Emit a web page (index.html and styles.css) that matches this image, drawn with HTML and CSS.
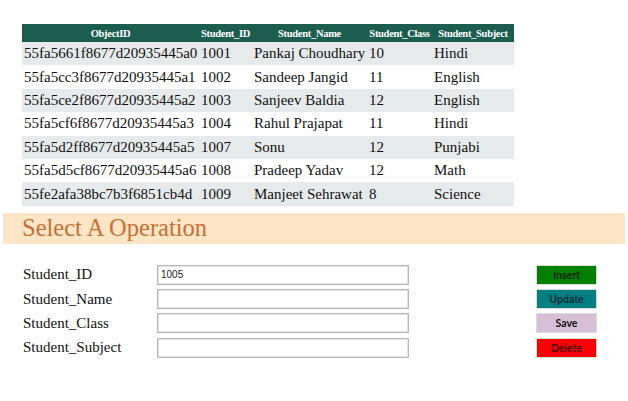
FILE: index.html
```html
<!DOCTYPE html>
<html lang="en">
  <head>
    <meta charset="UTF-8" />
    <title>Student Records</title>
    <link rel="stylesheet" href="styles.css">
  </head>
  <body>
    <table class="records">
      <thead>
        <tr>
          <th class="col-oid">ObjectID</th>
          <th class="col-id">Student_ID</th>
          <th class="col-name">Student_Name</th>
          <th class="col-class">Student_Class</th>
          <th class="col-subject">Student_Subject</th>
        </tr>
      </thead>
      <tbody>
        <tr><td>55fa5661f8677d20935445a0</td><td>1001</td><td>Pankaj Choudhary</td><td>10</td><td>Hindi</td></tr>
        <tr><td>55fa5cc3f8677d20935445a1</td><td>1002</td><td>Sandeep Jangid</td><td>11</td><td>English</td></tr>
        <tr><td>55fa5ce2f8677d20935445a2</td><td>1003</td><td>Sanjeev Baldia</td><td>12</td><td>English</td></tr>
        <tr><td>55fa5cf6f8677d20935445a3</td><td>1004</td><td>Rahul Prajapat</td><td>11</td><td>Hindi</td></tr>
        <tr><td>55fa5d2ff8677d20935445a5</td><td>1007</td><td>Sonu</td><td>12</td><td>Punjabi</td></tr>
        <tr><td>55fa5d5cf8677d20935445a6</td><td>1008</td><td>Pradeep Yadav</td><td>12</td><td>Math</td></tr>
        <tr><td>55fe2afa38bc7b3f6851cb4d</td><td>1009</td><td>Manjeet Sehrawat</td><td>8</td><td>Science</td></tr>
      </tbody>
    </table>

    <div class="banner">
      <h2>Select A Operation</h2>
    </div>

    <div class="operation">
      <div class="fields">
        <label>Student_ID</label>
        <input type="text" class="field-input" value="1005" />
        <label>Student_Name</label>
        <input type="text" class="field-input" />
        <label>Student_Class</label>
        <input type="text" class="field-input" />
        <label>Student_Subject</label>
        <input type="text" class="field-input" />
      </div>

      <div class="actions">
        <button class="btn btn-insert">Insert</button>
        <button class="btn btn-update">Update</button>
        <button class="btn btn-save">Save</button>
        <button class="btn btn-delete">Delete</button>
      </div>
    </div>
  </body>
</html>
```

FILE: styles.css
```css
body {
  margin: 0;
  padding: 0;
  background: #ffffff;
  font-family: "Liberation Serif", "Times New Roman", serif;
  color: #111;
}

.records {
  margin: 24px 0 0 22px;
  border-collapse: collapse;
  width: 492px;
  table-layout: fixed;
}

.records th {
  background: #1b5d4f;
  color: #ffffff;
  font-size: 10.5px;
  letter-spacing: -0.3px;
  font-weight: bold;
  height: 18px;
  padding: 0;
  text-align: center;
  white-space: nowrap;
}

.col-oid { width: 177px; }
.col-id { width: 53px; }
.col-name { width: 115px; }
.col-class { width: 65px; }
.col-subject { width: 82px; }

.records td {
  font-size: 15px;
  height: 23.4px;
  padding: 0 0 0 2px;
  white-space: nowrap;
  line-height: 17px;
}

.records tbody tr:nth-child(odd) {
  background: #e6eaeb;
}

.banner {
  margin: 7px 3px 0 3px;
  height: 31px;
  background: #fde5c6;
  display: flex;
  align-items: center;
}

.banner h2 {
  margin: 0 0 0 19px;
  font-size: 24.5px;
  font-weight: normal;
  color: #c96e34;
}

.operation {
  display: flex;
  margin-top: 21px;
  padding-left: 23px;
}

.fields {
  display: grid;
  grid-template-columns: 134px 252px;
  grid-auto-rows: 20px;
  row-gap: 4.3px;
  align-items: center;
}

.fields label {
  font-size: 15px;
}

.field-input {
  box-sizing: border-box;
  width: 252px;
  height: 20px;
  margin: 0;
  padding: 0 3px;
  border: 1px solid #b9b9b9;
  box-shadow: inset 0 0 0 1px #e2e2e2;
  font-family: "Liberation Sans", Arial, sans-serif;
  font-size: 10px;
  color: #222;
}

.actions {
  display: flex;
  flex-direction: column;
  gap: 4.3px;
  margin-left: 127px;
}

.btn {
  box-sizing: border-box;
  width: 61px;
  height: 20px;
  padding: 0;
  border: 1px solid #dcdcdc;
  font-family: Lato, "Open Sans", sans-serif;
  font-size: 10.5px;
  font-weight: bold;
  color: #111;
  cursor: pointer;
}

.btn-insert { background: #008000; color: #062006; }
.btn-update { background: #008080; color: #082838; }
.btn-save { background: #d8bfd8; color: #111; }
.btn-delete { background: #ff0000; color: #4a0000; }
```
